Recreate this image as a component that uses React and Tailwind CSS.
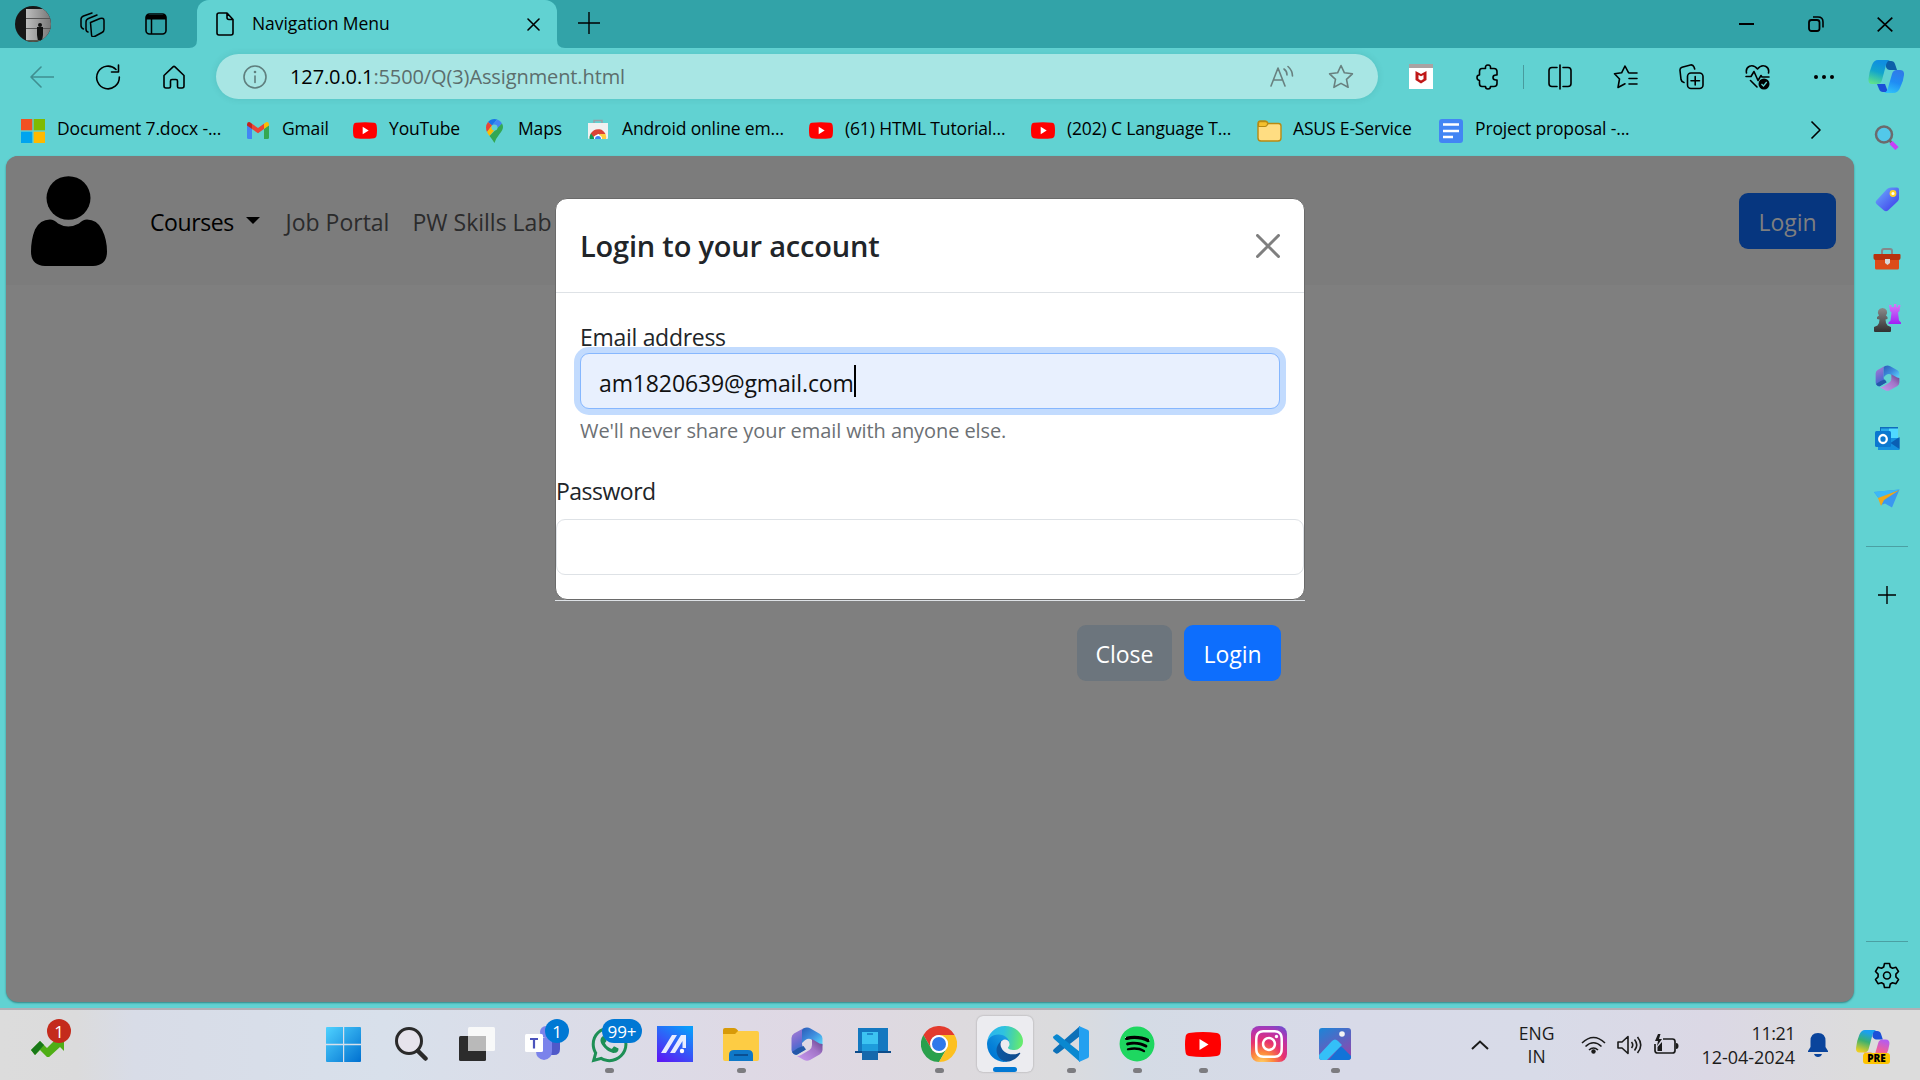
import { FaWhatsapp, FaSpotify, FaInstagram } from "react-icons/fa";

const S = ({ w = 24, h = w, vb, children, className = "" }) => (
  <svg width={w} height={h} viewBox={vb || `0 0 ${w} ${h}`} fill="none" className={"block shrink-0 " + className}>
    {children}
  </svg>
);
const line = { stroke: "currentColor", strokeWidth: 1.6, strokeLinecap: "round", strokeLinejoin: "round" };

/* ---------- logos ---------- */
const YouTube = ({ w = 24, h = 17 }) => (
  <S w={w} h={h} vb="0 0 36 25">
    <path d="M4 1Q18-.8 32 1q3 .5 3.400 3.500 1.200 8 0 16-.4 3-3.400 3.500-14 1.800-28 0-3-.5-3.400-3.500-1.200-8 0-16Q1 1.500 4 1z" fill="#f00" />
    <path d="M14.500 7v11l9-5.500z" fill="#fff" />
  </S>
);
const M365 = ({ w = 32, h = 34, id }) => (
  <S w={w} h={h} vb="0 0 32 34">
    <defs>
      <linearGradient id={id + "a"} x1="0" y1="0" x2=".3" y2="1"><stop stopColor="#b07fd6" /><stop offset=".6" stopColor="#6c6bd0" /><stop offset="1" stopColor="#2f6fd0" /></linearGradient>
      <linearGradient id={id + "b"} x1="0" y1="0" x2="1" y2="1"><stop stopColor="#2a5cb8" /><stop offset=".5" stopColor="#3f8fdf" /><stop offset="1" stopColor="#5fe0ff" /></linearGradient>
      <linearGradient id={id + "c"} x1="0" y1="1" x2="1" y2="0"><stop stopColor="#c99af0" /><stop offset=".6" stopColor="#a274c8" /><stop offset="1" stopColor="#5f3f86" /></linearGradient>
    </defs>
    <path d="M13 1 3 6.500Q.5 8 .5 11v12q0 2.800 2.500 4.300L5 28l8.500-5Q11 20 11 17V4q0-1.500 2-3z" fill={`url(#${id}a)`} />
    <path d="M1 25q1.500 3 5 2.800l9-5.300-2.500-3.500L7 21q-3 2-6 4z" fill="#2458a8" />
    <path d="M11 3q1-2.500 5-2.500 2 0 3.500 1L29 7q2.500 1.500 2.500 4.500V19l-10.500-6q-3-2.500-7 .2L11 16z" fill={`url(#${id}b)`} />
    <path d="M31.500 17v6q0 2.800-2.500 4.300L19 33q-3 1.500-6 0l-7-4q2 .2 4-1l8.500-5q2.500-2 2.500-5v-6l7.500 4.500z" fill={`url(#${id}c)`} />
  </S>
);
const Copilot = ({ id, w = 36, h = 33, rainbow }) => (
  <S w={w} h={h} vb="0 0 36 33">
    <defs>
      <linearGradient id={id + "a"} x1=".6" y1="0" x2=".3" y2="1">
        <stop offset=".1" stopColor={rainbow ? "#1aa0f0" : "#0f8fe0"} /><stop offset=".5" stopColor={rainbow ? "#3ab070" : "#12a5cc"} /><stop offset="1" stopColor={rainbow ? "#f0d020" : "#5ce08c"} />
      </linearGradient>
      <linearGradient id={id + "b"} x1=".6" y1="0" x2=".3" y2="1">
        <stop stopColor={rainbow ? "#b45cf0" : "#2f7be8"} /><stop offset=".5" stopColor={rainbow ? "#f0609a" : "#1f8cf4"} /><stop offset="1" stopColor={rainbow ? "#ffa050" : "#2fc0fa"} />
      </linearGradient>
    </defs>
    <path d="M18 1h5q3 0 4 3l2 6h-7q-3 0-4-3z" fill={rainbow ? "#1c50d8" : "#0c5fa8"} />
    <path d="M9 24h8l3 8h-5q-3 0-4-3z" fill={rainbow ? "#f58a4a" : "#1a50d8"} />
    <path d="M10 0h12q-3 1-4 5l-4 15q-1 4-5 4H4q-4 0-3.500-5Q1 12 4 5q2-5 6-5z" fill={`url(#${id}a)`} />
    <path d="M25 33H16q3-1 4-5l4-14q1-4 5-4h3q4.500 0 4 5-.5 6-4 13-2 5-7 5z" fill={`url(#${id}b)`} />
  </S>
);
const EdgeLogo = () => (
  <S w={36} vb="0 0 256 256">
    <defs>
      <linearGradient id="ea" x1="63" y1="177" x2="241" y2="177" gradientUnits="userSpaceOnUse"><stop stopColor="#0c59a4" /><stop offset="1" stopColor="#114a8b" /></linearGradient>
      <linearGradient id="ec" x1="157" y1="99" x2="46" y2="221" gradientUnits="userSpaceOnUse"><stop stopColor="#1b9de2" /><stop offset=".16" stopColor="#1595df" /><stop offset=".67" stopColor="#0680d7" /><stop offset="1" stopColor="#0078d4" /></linearGradient>
      <linearGradient id="ee" x1="10" y1="80" x2="250" y2="110" gradientUnits="userSpaceOnUse"><stop stopColor="#2bb5ee" /><stop offset=".45" stopColor="#2fc2df" /><stop offset=".75" stopColor="#4bd6a0" /><stop offset="1" stopColor="#66eb6e" /></linearGradient>
    </defs>
    <g transform="translate(-4.63 -4.92)">
      <path fill="url(#ea)" d="M235.680 195.460a93.730 93.730 0 01-10.540 4.710 101.870 101.870 0 01-35.900 6.460c-47.320 0-88.540-32.550-88.540-74.320A31.480 31.480 0 01117.130 105c-42.800 1.800-53.800 46.400-53.800 72.530 0 73.880 68.090 81.370 82.760 81.370 7.910 0 19.840-2.300 27-4.560l1.310-.44a128.340 128.340 0 0066.600-52.800 4 4 0 00-5.320-5.640z" />
      <path fill="url(#ec)" d="M110.340 246.340A79.200 79.200 0 0187.600 225a80.720 80.720 0 0129.530-120c3.120-1.470 8.450-4.130 15.540-4a32.350 32.350 0 0125.690 13 31.880 31.880 0 016.360 18.660c0-.21 24.460-79.600-80-79.600-43.900 0-80 41.660-80 78.210a130.150 130.150 0 0012.110 56 128 128 0 00156.380 67.110 75.550 75.550 0 01-62.780-8z" />
      <path fill="url(#ee)" d="M156.940 153.780c-.81 1.050-3.300 2.500-3.300 5.660 0 2.610 1.700 5.120 4.720 7.230 14.380 10 41.490 8.680 41.560 8.680a59.560 59.560 0 0030.270-8.350 61.380 61.380 0 0030.430-52.880c.26-22.410-8-37.310-11.340-43.910-21.190-41.440-66.930-65.290-116.670-65.290a128 128 0 00-128 126.200c.48-36.540 36.800-66.050 80-66.050 3.500 0 23.460.34 42 10.070 16.340 8.580 24.900 18.940 30.850 29.210 6.180 10.670 7.280 24.150 7.280 29.520s-2.740 13.330-7.800 19.910z" />
    </g>
  </S>
);

/* ---------- bookmarks ---------- */
const bookmarks = [
  { w: "w-[225px]", t: "Document 7.docx -...", i: <S><path d="M0 0h11.300v11.300H0z" fill="#f25022" /><path d="M12.700 0H24v11.300H12.700z" fill="#7fba00" /><path d="M0 12.700h11.300V24H0z" fill="#00a4ef" /><path d="M12.700 12.700H24V24H12.700z" fill="#ffb900" /></S> },
  { w: "w-[107px]", t: "Gmail", i: <S w={22} h={17} vb="0 0 22 17"><path d="M0 3v12.500Q0 17 1.500 17H5V6.500z" fill="#4285f4" /><path d="M22 3v12.500q0 1.500-1.500 1.500H17V6.500z" fill="#34a853" /><path d="M0 3.500V2.200Q.4-.6 3 .2L5 1.700V7L0 3.500z" fill="#c5221f" /><path d="M22 3.500V2.200Q21.600-.6 19 .2l-2 1.500V7l5-3.500z" fill="#fbbc04" /><path d="M5 1.700 11 6l6-4.300V7l-6 4.300L5 7z" fill="#ea4335" /></S> },
  { w: "w-[129px]", t: "YouTube", i: <YouTube /> },
  { w: "w-[104px]", t: "Maps", i: <S w={17} h={24}><path d="M8.500 0Q4.500 0 2 3l4 3.500L11.200.5Q10 0 8.500 0z" fill="#1a73e8" /><path d="M2 3Q0 5.500 0 8.500q0 2.500 1 4.500l5-6.500z" fill="#ea4335" /><path d="M11.200.5 6 6.500l5 4.500 5-6.500Q14.500 1.600 11.200.5z" fill="#4285f4" /><path d="M1 13q1 2 2.500 4l7.500-9-5-1.500z" fill="#fbbc04" /><path d="M16 4.500 3.500 17Q6 20 8.500 24q1-4 5-9 3.500-4 3.500-7 0-2-1-3.500z" fill="#34a853" /><circle cx="8.500" cy="8.400" r="3" fill="#61d2d2" /></S> },
  { w: "w-[223px]", t: "Android online em...", i: <S w={22} h={21} className="mb-[3px]"><path d="M7 4V1.500h8V4" stroke="#9aa0a6" strokeWidth="1.500" /><path d="M1 4h20v15q0 1-1 1H2q-1 0-1-1z" fill="#f1f1f1" /><path d="M3 20a8 8 0 0 1 2.500-7.500 8 8 0 0 1 13 2.500H11z" fill="#db4437" /><path d="M2.500 20a7.500 7.500 0 0 1 1.500-5.500l4 5.500z" fill="#0f9d58" /><path d="M12 15h6.500q1 2.500.5 5H12z" fill="#ffcd40" /><path d="M7 20a4 4 0 1 1 8 0z" fill="#fff" /><path d="M8 20a3 3 0 1 1 6 0z" fill="#4285f4" /></S> },
  { w: "w-[222px]", t: "(61) HTML Tutorial...", i: <YouTube /> },
  { w: "w-[226px]", t: "(202) C Language T...", i: <YouTube /> },
  { w: "w-[182px]", t: "ASUS E-Service", i: <S w={25} h={22}><path d="M1 4q0-3 2.500-3H8q1.500 0 2.500 1.500L11 3.500h10.500Q24 3.500 24 6v12q0 3-3 3H4q-3 0-3-3z" fill="#ffdd82" stroke="#b98a12" strokeWidth="1.400" /><path d="M1.500 6.500H8q1 0 1.700-.8L11 3.800 9.500 1.600H3q-1.500 0-1.500 2z" fill="#f5c02e" stroke="#b98a12" strokeWidth="1.200" /></S> },
  { w: "w-[300px]", t: "Project proposal -...", i: <S><rect width="24" height="24" rx="3" fill="#4285f4" /><path d="M4 5.500h16M4 12h16M4 18h10" stroke="#fff" strokeWidth="2.600" /></S> },
];

const Sep = ({ className = "" }) => <div className={"h-px w-[42px] shrink-0 bg-[#4ba0a3] " + className} />;

/* ---------- taskbar ---------- */
const Task = ({ children, dot, active, badge, wide, className = "" }) => (
  <div className={"relative flex h-14 w-14 shrink-0 items-center justify-center rounded-md " + (active ? "bg-[#ececf0] shadow-[0_0_2px_rgba(0,0,0,0.3)] " : "") + className}>
    {children}
    {badge && (
      <span className={"absolute top-[3px] flex h-6 items-center justify-center rounded-full bg-[#0078d4] text-[17px] text-white " + (wide ? "left-[21px] w-[40px]" : "left-[30px] w-6")}>{badge}</span>
    )}
    {active && <span className="absolute bottom-0 h-[5px] w-6 rounded-full bg-[#0078d4]" />}
    {dot && <span className="absolute -bottom-px h-[5px] w-[9px] rounded-full bg-[#7c7c80]" />}
  </div>
);

export default function App() {
  return (
    <div className="flex h-[1080px] w-[1920px] flex-col overflow-hidden bg-[#61d2d2] font-['Open_Sans',sans-serif] text-[17.500px] leading-none text-black">
      {/* tab strip */}
      <header className="flex h-12 shrink-0 bg-[#32a3a8]">
        <div className="flex w-[197px] items-center rounded-br-xl pl-[15px]">
          <S w={36} h={36}>
            <defs><clipPath id="av"><circle cx="18" cy="18" r="18" /></clipPath><linearGradient id="avg"><stop stopColor="#bdbdbd" /><stop offset="1" stopColor="#777" /></linearGradient></defs>
            <g clipPath="url(#av)"><path d="M0 0h36v36H0z" fill="#161616" /><path d="M11 3h25v31H11z" fill="url(#avg)" /><path d="M11 12.500h25M11 22.500h25" stroke="#555" /><circle cx="25" cy="19" r="2" fill="#111" /><path d="M22 21h6v8l-1 6h-4l-1-6z" fill="#111" /><path d="M11 34h25v2H11z" fill="#55564c" /></g>
          </S>
          <S w={25} h={25} className="ml-[29px]"><g {...line} strokeWidth="1.500"><path d="m10.500 9.500 9.500-4q4-1 4 2v9q0 2-2 3l-6.500 3.500q-4 2-4-1.500z" transform="translate(0 1)" /><path d="M8 20q-2-.5-2-3V10q0-2.500 2.500-3.500L17 3" /><path d="M3.500 17Q1 16 1 13.500V7.500Q1 5 3.500 4L12 1" /></g></S>
          <S w={22} h={22} className="ml-[40px]"><rect x="1" y="1" width="20" height="20" rx="3.500" stroke="#000" strokeWidth="1.600" /><path d="M1 2h20v4.500H1z" fill="#000" /><path d="M6.500 6v15" stroke="#000" strokeWidth="1.500" /></S>
        </div>
        <div className="relative flex w-[360px] items-center rounded-t-xl bg-[#61d2d2] pl-[19px]">
          <S w={8} className="absolute bottom-0 -left-2"><path d="M8 0v8H0q8 0 8-8z" fill="#61d2d2" /></S>
          <S w={8} className="absolute -right-2 bottom-0"><path d="M0 0v8h8Q0 8 0 0z" fill="#61d2d2" /></S>
          <S w={18} h={24}><path {...line} d="M3 1h8l6 6.500V21q0 2-2 2H3q-2 0-2-2V3q0-2 2-2zM11 1v4.500q0 2 2 2h4" /></S>
          <span className="ml-[18px] tracking-[-0.08px] whitespace-nowrap">Navigation Menu</span>
          <S w={13} className="absolute left-[330px] top-[18px]"><path {...line} d="m1 1 11 11M12 1 1 12" /></S>
        </div>
        <S w={22} className="mt-[12px] ml-[21px]"><path d="M11 0v22M0 11h22" stroke="#000" strokeWidth="1.400" /></S>
        <div className="ml-auto flex items-center pr-[27px]">
          <S w={15} h={2}><path d="M0 1h15" stroke="#000" strokeWidth="2" /></S>
          <S w={16} h={16} className="ml-[54px]"><rect x="1" y="4" width="10.500" height="11" rx="2.500" stroke="#000" strokeWidth="1.800" /><path d="M5 1h5q5 0 5 5v5.500" stroke="#000" strokeWidth="1.600" /></S>
          <S w={16} h={15} className="ml-[53px]"><path d="m.7.7 14.600 13.600M15.300.7.7 14.300" stroke="#000" strokeWidth="1.700" /></S>
        </div>
      </header>

      {/* toolbar */}
      <div className="flex h-[57px] shrink-0 items-center">
        <S className="ml-[30px] text-[#3f8f91]"><path {...line} d="M11 2 1 12l10 10M1 12h22.500" /></S>
        <S w={26} h={26} className="ml-[41px]"><path {...line} d="M21 5.500A11.300 11.300 0 1 0 24.300 13M23.500 1v7h-7" /></S>
        <S w={24} h={24} className="ml-[41px]"><path {...line} d="M2 10.500 11 1.800q1-.9 2 0l9 8.700V21q0 2-2 2h-3q-1.500 0-1.500-1.500V16q0-1.500-1.500-1.500h-4Q8.500 14.500 8.500 16v5.500Q8.500 23 7 23H4q-2 0-2-2z" /></S>
        <div className="ml-[30px] flex h-[45px] w-[1162px] items-center rounded-full bg-[#a8e6e4] pl-[27px] shadow-[0_0_7px_rgba(0,70,70,0.12)]">
          <S className="text-[#5f7f7e]"><circle {...line} cx="12" cy="12" r="11" /><path {...line} d="M12 11v6.500" /><circle cx="12" cy="7" r="1.300" fill="currentColor" /></S>
          <span className="ml-[23px] text-[20px] tracking-[-0.11px] whitespace-nowrap text-[#5c6e6d]"><span className="text-black">127.0.0.1</span>:5500/Q(3)Assignment.html</span>
          <S w={25} h={24} className="ml-auto mr-[33px] text-[#68807f]"><path {...line} d="m1 21 7-18 7 18M3.500 15h9M14 4q3 2 3 6M18 1.500q4.500 4 4.500 9.500" /></S>
          <S w={26} h={25} className="mr-[24px] text-[#68807f]"><path {...line} d="m13 1.500 3.400 7.300 8 1-5.900 5.500 1.600 8L13 19.400l-7.100 3.900 1.600-8L1.600 9.800l8-1z" /></S>
        </div>
        <S w={24} h={25} className="ml-[31px]"><path d="M0 0h24v25H0z" fill="#fff" /><path d="M0 0h24v4H0z" fill="#a9a3a3" /><path d="m6.500 7 5.500 3 5.500-3v9L12 19.500 6.500 16z" fill="#c01818" /><path d="m9.500 11 2.500 1.300 2.500-1.300v4L12 16.500 9.500 15z" fill="#fff" /></S>
        <S w={24} h={26} className="ml-[43px]"><path {...line} d="M6 4.500h3.500q-.5-3.500 2.500-3.500t2.500 3.500H18q3 0 3 3v3.500h-1q-3 0-3 2.500t3 2.500h1v3.500q0 3-3 3h-3.500Q14.500 25 12 25t-2.500-2.500H6q-2.500 0-2.500-3v-3Q1 16 1 13.500T3.500 11V7.500q0-3 2.500-3z" /></S>
        <div className="ml-[23px] h-6 w-px bg-[#489b9e]" />
        <S w={24} h={26} className="ml-[24px]"><path {...line} d="M9 3.500H4q-3 0-3 3v13q0 3 3 3h5M15 3.500h5q3 0 3 3v13q0 3-3 3h-5M12 1v24" /></S>
        <S w={25} h={26} className="ml-[41px]"><path {...line} d="m17 9-1.500-.3L12 2 8.600 8.800l-7.100 1 5 5.200L5 23.500l7-3.700M17 9h7M16 14.500h8M16 20h8" /></S>
        <S w={25} h={26} className="ml-[41px]"><rect {...line} x="8.500" y="9" width="15.500" height="15.500" rx="3.500" /><path {...line} d="M16.200 12.500v8.500M12 16.700h8.500M5 18.500Q2.500 18 2 15.500L1 6.500Q.7 4 3 3.200L11.500 1q2.500-.5 3.500 2l.7 2" /></S>
        <S w={25} h={26} className="ml-[41px]"><path {...line} d="M1.500 9Q.5 4 4.500 2.200 9 .5 12.500 5 16 .5 20.500 2.200q4 1.800 3 6.800M1 12.500h5l3-5 4 9 3-5 1 1.500h7M5.500 16.500l6.500 6.500" /><circle cx="19" cy="20" r="5.500" fill="#000" /><path d="m16.500 20 2 2 3.200-4" stroke="#61d2d2" strokeWidth="1.300" /></S>
        <S w={20} h={4} className="ml-[44px]"><circle cx="2" cy="2" r="2" fill="#000" /><circle cx="10" cy="2" r="2" fill="#000" /><circle cx="18" cy="2" r="2" fill="#000" /></S>
        <div className="ml-[34px]"><Copilot id="cp" /></div>
      </div>

      <div className="flex h-[903px] shrink-0">
        <div className="flex w-[1854px] flex-col">
          {/* favourites bar */}
          <nav className="flex h-[51px] shrink-0 items-center pl-[21px]">
            {bookmarks.map((b) => (
              <div key={b.t} className={"flex shrink-0 items-center gap-3 " + b.w}>
                <span className="flex w-6 justify-center">{b.i}</span>
                <span className="mb-[3px] tracking-[-0.15px] whitespace-nowrap">{b.t}</span>
              </div>
            ))}
            <S w={12} h={20} className="mb-px ml-[71px]"><path {...line} strokeLinecap="butt" d="m1.500 1.500 8.500 8.500-8.500 8.500" /></S>
          </nav>

          {/* web page */}
          <main className="relative ml-[6px] flex h-[846px] flex-col overflow-hidden rounded-[12px] bg-[#7f7f7f] text-[23px] shadow-[0_1px_2px_rgba(0,60,60,0.5)]">
            <div className="flex h-[129px] shrink-0 items-center bg-[#7c7c7c] pl-[25px] pr-[18px] text-[#2b2b2c]">
              <S w={76} h={91} className="mt-[2px]"><ellipse cx="37.500" cy="22" rx="22" ry="21.800" fill="#000" /><path d="M19 43.500q4 0 8 4 10 6 21 0 4-4 8-4 10 0 15 10 5 10 5 22 0 14-14 14.500H14Q0 89.500 0 75.500q0-12 4-22 5-10 15-10z" fill="#000" /></S>
              <span className="mt-1 ml-[43px] w-24 tracking-[-0.4px] whitespace-nowrap text-black">Courses</span>
              <S w={14} h={7}><path d="M0 0h14L7 7z" fill="#000" /></S>
              <span className="mt-1 ml-[25.500px] w-[127px] whitespace-nowrap">Job Portal</span>
              <span className="mt-1 whitespace-nowrap">PW Skills Lab</span>
              <span className="ml-auto flex h-14 w-[97px] items-center justify-center rounded-[9px] bg-[#06367f] pt-[3px] text-[#7f7f7f]">Login</span>
            </div>

            {/* login dialog */}
            <section className="absolute top-[42px] left-[549px] flex w-[750px] flex-col text-[#212529]">
              <div className="flex h-[402px] flex-col rounded-[12px] border border-[#6a6a6a] bg-white">
                <div className="flex h-[94px] shrink-0 items-center justify-between border-b border-[#dee2e6] px-6">
                  <h1 className="text-[29px] font-semibold tracking-[-0.2px]">Login to your account</h1>
                  <S><path d="m1.500 1.500 21 21M22.500 1.500l-21 21" stroke="#7f7f7f" strokeWidth="3" strokeLinecap="round" /></S>
                </div>
                <div className="flex flex-col px-6 pt-6">
                  <label className="flex h-9 items-center pt-1 tracking-[-0.3px]">Email address</label>
                  <div className="flex h-14 items-center rounded-[9px] border-[1.500px] border-[#86b7fe] bg-[#e8f0fe] pl-[18px] text-[#111] ring-6 ring-[#c2dbfe]">
                    <span className="pt-1 tracking-[-0.13px]">am1820639@gmail.com</span>
                    <span className="h-8 w-0.5 bg-black" />
                  </div>
                  <p className="mt-[6px] flex h-8 items-center text-[20px] tracking-[-0.09px] text-[#6c7074]">We'll never share your email with anyone else.</p>
                </div>
                <label className="mt-[25px] flex h-9 items-center pt-[3px] tracking-[-0.5px]">Password</label>
                <div className="mt-[11px] h-14 rounded-[9px] border-[1.500px] border-[#dee2e6]" />
              </div>
              <div className="flex h-[104px] items-center justify-end gap-3 border-t border-[#dee2e6] pr-6 text-white">
                <button className="h-14 w-[95px] rounded-[9px] bg-[#6c757d] pt-[3px]">Close</button>
                <button className="h-14 w-[97px] rounded-[9px] bg-[#0d6efd] pt-[3px]">Login</button>
              </div>
            </section>
          </main>
        </div>

        {/* sidebar */}
        <aside className="flex w-[66px] flex-col items-center">
          <S w={26} h={25} className="mt-5"><circle cx="10" cy="9.500" r="8" fill="#52c8ea" stroke="#6c6a6c" strokeWidth="2.500" /><path d="m15 15 2.500 2.500" stroke="#6c6a6c" strokeWidth="2.500" /><path d="m17 17.500 6 6" stroke="#c840f8" strokeWidth="4.500" /></S>
          <S w={24} h={25} className="mt-[37px]"><defs><linearGradient id="tg" x1="0" y1="0" x2="1" y2="1"><stop stopColor="#6fb2ff" /><stop offset="1" stopColor="#3a35e8" /></linearGradient></defs><path d="M1 14 12 2q1.500-1.500 4-1.500h6q2 0 2 2V11q0 2-1.500 3.500L13 23.500q-2 1.500-4 0L1.500 17q-1.500-1.500-.5-3z" fill="url(#tg)" /><circle cx="18" cy="6.500" r="2.500" stroke="#ffd02a" strokeWidth="1.800" fill="#fff" /></S>
          <S w={28} h={22} className="mt-[36px]"><path d="M9 6V3q0-2 2-2h6q2 0 2 2v3" stroke="#85888a" strokeWidth="2" /><path d="M2 10h24v10q0 1.500-1.500 1.500h-21Q2 21.500 2 20z" fill="#dc4c18" /><path d="M1.500 6h25q1 0 1 1v3q0 2-2 2h-23q-2 0-2-2V7q0-1 1-1z" fill="#b8320e" /><path d="M12 11h5v4l-2.500 2-2.500-2z" fill="#d8d8d8" /></S>
          <S w={28} h={28} className="mt-[34px]"><defs><linearGradient id="pw" x1="0" y1="0" x2="0" y2="1"><stop stopColor="#8a8a8a" /><stop offset="1" stopColor="#303030" /></linearGradient><linearGradient id="rk" x1="0" y1="0" x2="0" y2="1"><stop stopColor="#d77bf8" /><stop offset="1" stopColor="#a020f5" /></linearGradient></defs><path d="M16 1h2.500v2H21V0h2.500v3H25V1h2.500l-1 6L25 8.500l1 8 2 2V20H15.500v-1.500l2-2 1-8L17 7z" fill="url(#rk)" /><path d="M9.500 4a4.500 4.500 0 0 1 3.500 7.500l1.500 1.500v2l-2 .5q0 4 2 6L18 23v4q0 1-1 1H2q-1 0-1-1v-4l3.500-1.500q2-2 2-6L4 15v-2l2-1.500A4.500 4.500 0 0 1 9.500 4z" fill="url(#pw)" /></S>
          <div className="mt-[33px]"><M365 id="s" w={25} h={26} /></div>
          <S w={25} h={25} className="mt-[35px]"><path d="M5 1h18v15H5z" fill="#0f6cbd" /><path d="M6 2.500h8V12H6z" fill="#28a8ea" /><path d="M14 2.500h9V12h-9z" fill="#50d9ff" /><path d="M3 12h21.500v12H3z" fill="#1490df" /><path d="m24.500 11-9 6 9 6z" fill="#0a5fb4" /><rect y="5" width="16" height="16" rx="1.500" fill="#0b78d0" /><ellipse cx="8" cy="13" rx="3.800" ry="4" stroke="#fff" strokeWidth="2.300" /></S>
          <S w={26} h={19} className="mt-[38px]"><path d="M0 3 25.500.5 18 18.500l-7-4-4 1.500L5 10z" fill="#3a98f0" /><path d="M0 3 25.500.5 5 9.500z" fill="#3cb8f8" /><path d="m4 9 21.500-8L10 11l-3 6z" fill="#f0a818" /></S>
          <Sep className="mt-[38px]" />
          <S w={18} h={18} className="mt-[39px]"><path d="M9 0v18M0 9h18" stroke="#000" strokeWidth="1.400" /></S>
          <Sep className="mt-[337px]" />
          <S w={26} h={27} className="mt-[20px]" vb="0 0 26 26"><path {...line} d="M10.500 1h5l.8 3.500 2.200 1.300 3.500-1 2.500 4.200-2.600 2.600v2.800l2.600 2.600-2.500 4.200-3.500-1-2.200 1.300-.8 3.500h-5l-.8-3.500-2.200-1.300-3.500 1L1.500 17l2.600-2.600v-2.800L1.500 9 4 4.800l3.500 1 2.200-1.300z" /><circle {...line} cx="13" cy="13" r="3.500" /></S>
        </aside>
      </div>

      {/* taskbar */}
      <footer className="flex h-[72px] shrink-0 border-t-2 border-[#b0b0b5] bg-[linear-gradient(90deg,#dcdcdc_0%,#dbdbdc_4%,#d8dce7_7%,#d8e0eb_20%,#dfd8e4_42%,#dddade_50%,#dbdbdd_55%,#d4dbe5_59%,#d8dae8_70%,#d8dbe8_80%,#dbd8e5_89%,#dcdcdc_97%)] text-[17px] text-[#1b1b1b]">
        <div className="relative mt-[9px] ml-[31px] h-9 w-10">
          <S w={34} h={20} className="mt-[18px]"><path d="m0 13 9-9 7 7 8-8L20 0h13v14l-4-4-12 11-8-8-5 5z" fill="#4fae16" /><path d="m0 13 9-9 4 4-9 10z" fill="#187818" /></S>
          <span className="absolute top-0 left-4 flex h-6 w-6 items-center justify-center rounded-full bg-[#c42b1c] text-white">1</span>
        </div>
        <div className="mt-[6px] ml-[246px] flex gap-[10px]">
          <Task className="pr-[3px]"><S w={35}><defs><linearGradient id="wn" x1="0" y1="0" x2="1" y2="1"><stop stopColor="#4fd2ff" /><stop offset="1" stopColor="#0070d0" /></linearGradient></defs><path d="M1 0h16v16.800H0V1q0-1 1-1zm17.200 0H34q1 0 1 1v15.800H18.200zM0 18.200h17V35H1q-1 0-1-1zm18.200 0H35V34q0 1-1 1H18.200z" fill="url(#wn)" /></S></Task>
          <Task><S w={33} h={34}><circle cx="14" cy="14" r="12.500" stroke="#2a2a2a" strokeWidth="3" fill="#e6e3ec" /><path d="m23 24 7.500 7.500" stroke="#2a2a2a" strokeWidth="4.500" strokeLinecap="round" /></S></Task>
          <Task><S w={36} h={34}><rect y="9" width="27" height="25" rx="1.500" fill="#2c2c2c" /><rect x="9" width="27" height="24" rx="1.500" fill="#fafafa" fillOpacity=".95" /><path d="M9 9h18v15H9z" fill="#b9b9b9" /></S></Task>
          <Task badge="1"><S w={36} h={36}><circle cx="21" cy="6" r="6" fill="#7b83eb" /><path d="M25 13h10v10q0 6-6 6h-4z" fill="#5059c9" /><path d="M11 12h16v13q0 8-8 9-8-1-8-9z" fill="#7b83eb" /><rect y="8" width="18" height="18" rx="1.500" fill="#fff" /><path d="M5 13h8M9 13v9.500" stroke="#4b53bc" strokeWidth="2.200" /></S></Task>
          <Task badge="99+" wide dot><FaWhatsapp size={41} color="#1d8f55" /></Task>
          <Task><S w={36}><defs><linearGradient id="my" x1=".8" y1="0" x2=".2" y2="1"><stop stopColor="#0a9cfb" /><stop offset="1" stopColor="#5a1cf4" /></linearGradient></defs><path d="M0 0h36v36H0z" fill="url(#my)" /><path d="M4 27 15 9h5L9 27zM13 27 24 9h5v13h-3.500v-7L18 27z" fill="#e8ecff" /><circle cx="25" cy="25" r="2.200" fill="#fff" /></S></Task>
          <Task dot><S w={36} h={33}><path d="M0 2q0-2 2-2h9q2 0 3.500 2L16 4v6H0z" fill="#d79a08" /><path d="M0 6h12l3-3h19q2 0 2 2v26q0 2-2 2H2q-2 0-2-2z" fill="#fdcc44" /><path d="M6 33v-6q0-5 5-5h14q5 0 5 5v6z" fill="#0f78c8" /><path d="M11 27h14" stroke="#0a4f92" strokeWidth="2" /></S></Task>
          <Task><M365 id="t" /></Task>
          <Task><S w={36} h={32}><path d="M3 0h30v24H3z" fill="#1478c0" /><path d="M0 23h36v2H0z" fill="#0d4c8a" /><path d="M7 4h16v28H7z" fill="#1568ac" /><path d="M7 4h16v12H7z" fill="#3cc4f2" /><path d="M7 16h16v7H7z" fill="#1e9cdc" /><path d="M12 6h6" stroke="#1478c0" strokeWidth="1.500" /></S></Task>
          <Task dot><S w={36}><path d="M2.400 9A18 18 0 0 1 33.600 9H18a9 9 0 0 0-7.800 4.500v9z" fill="#e33b2e" /><path d="M2.400 9A18 18 0 0 0 18 36l7.800-13.500a9 9 0 0 1-15.600 0z" fill="#2aa04c" /><path d="M33.600 9A18 18 0 0 1 18 36l7.800-13.500A9 9 0 0 0 25.800 13.500L18 9z" fill="#fdc020" /><circle cx="18" cy="18" r="9" fill="#fff" /><circle cx="18" cy="18" r="7" fill="#2f78ea" /></S></Task>
          <Task active><EdgeLogo /></Task>
          <Task dot><S w={36}><path d="M27 0 1 23q-2 2 0 3l2 1.500q1 .5 2.500-.5L27 10z" fill="#0c70b8" /><path d="M27 36 1 13q-2-2 0-3l2-1.500q1-.5 2.500.5L27 26z" fill="#0a88d0" /><path d="M26 0 35 4q1 .5 1 2v24q0 1.500-1 2l-9 4z" fill="#24a0f0" /></S></Task>
          <Task dot><FaSpotify size={36} color="#1ed760" className="bg-[radial-gradient(circle,#000_50%,transparent_52%)]" /></Task>
          <Task dot><YouTube w={36} h={25} /></Task>
          <Task><span className="flex h-9 w-9 items-center justify-center rounded-[8px] bg-[radial-gradient(circle_at_30%_105%,#ffd567_0%,#fd8a3c_25%,#e8316f_50%,#b534b0_75%,#5a55d8_100%)]"><FaInstagram size={32} color="#fff" /></span></Task>
          <Task dot><S w={32}><defs><linearGradient id="ph" x1="0" y1="0" x2=".6" y2="1"><stop stopColor="#1a86d8" /><stop offset="1" stopColor="#8a4ab0" /></linearGradient></defs><rect width="32" height="32" rx="3" fill="url(#ph)" /><path d="M10 32 20 20q2-2 4 0l8 8v1q0 3-3 3z" fill="#1273d8" /><path d="m0 27 13-14q3-3 6 0l4 4-15 15H3q-3 0-3-3z" fill="#34c0f8" /><circle cx="23" cy="6" r="2.800" fill="#f4f4f4" /></S></Task>
        </div>
        <div className="ml-auto flex h-[70px] items-center pr-[30px]">
          <S w={18} h={10}><path d="m1 9 8-7.500L17 9" stroke="#1b1b1b" strokeWidth="2" /></S>
          <div className="ml-[30px] w-[36px] text-center text-[17.500px] leading-[23px]">ENG<br />IN</div>
          <S w={25} h={18} className="ml-[26px]"><g stroke="#1b1b1b" strokeWidth="1.600"><path d="M1 7q11.500-11 23 0M4.500 10.500q8-7.500 16 0M8 14q4.500-4 9 0" /></g><circle cx="12.500" cy="15.500" r="2.200" fill="#1b1b1b" /></S>
          <S w={25} h={20} className="ml-[11px]"><path d="M1 7h4l6-5.500v17L5 13H1zM14.500 7q2.500 3 0 6M17.500 4.500q4.500 5.500 0 11M20.500 2q6.500 8 0 16" stroke="#1b1b1b" strokeWidth="1.600" strokeLinejoin="round" /></S>
          <S w={25} h={20} className="mb-[3px] ml-[12px]"><path d="M9 5h9.500Q21 5 21 7.500v9q0 2.500-2.500 2.500h-15Q1 19 1 16.500V10" stroke="#1b1b1b" strokeWidth="1.700" /><path d="M3.500 13 8 8v9H3.500zM22 9q2.500 0 2.500 3T22 15zM4 0 1 7h3L3 12l5-7H5l1.500-5z" fill="#1b1b1b" /></S>
          <div className="ml-[23px] text-right text-[18px] leading-6 tracking-[-0.05px]"><span className="tracking-[-0.5px]">11:21</span><br />12-04-2024</div>
          <S w={20} h={24} className="ml-[13px]"><path d="M10 0q7.500 0 7.500 8v6l2.500 4v1H0v-1l2.500-4V8Q2.500 0 10 0zM6 21h8q-1 3-4 3t-4-3z" fill="#0a449c" /></S>
          <div className="relative ml-[27px]">
            <Copilot id="pc" w={35} h={31} rainbow />
            <span className="absolute top-[23px] left-[8px] flex h-[11px] w-[27px] items-center justify-center rounded-[3px] bg-[#fdc400] text-[10px] font-extrabold text-black">PRE</span>
          </div>
        </div>
      </footer>
    </div>
  );
}
